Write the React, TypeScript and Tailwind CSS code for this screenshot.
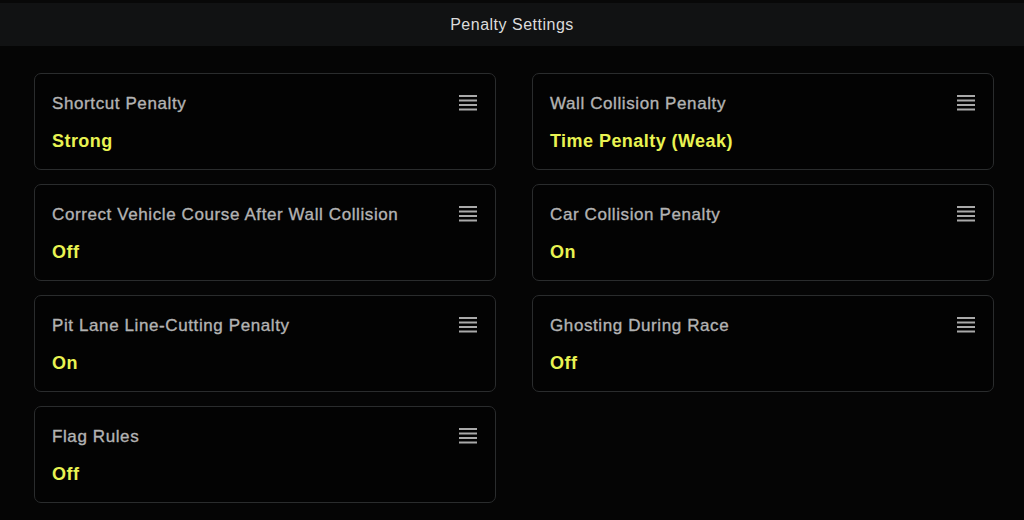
import React from "react";

// One setting card: label on top, current value in yellow below, menu glyph at right
interface SettingCardProps {
  label: string;
  value: string;
}

const LEFT_SETTINGS: SettingCardProps[] = [
  { label: "Shortcut Penalty", value: "Strong" },
  { label: "Correct Vehicle Course After Wall Collision", value: "Off" },
  { label: "Pit Lane Line-Cutting Penalty", value: "On" },
  { label: "Flag Rules", value: "Off" },
];

const RIGHT_SETTINGS: SettingCardProps[] = [
  { label: "Wall Collision Penalty", value: "Time Penalty (Weak)" },
  { label: "Car Collision Penalty", value: "On" },
  { label: "Ghosting During Race", value: "Off" },
];

function MenuIcon() {
  return (
    <svg width="18" height="16" viewBox="0 0 18 16" className="shrink-0">
      <rect x="0" y="0" width="18" height="2" fill="#a9a9a9" />
      <rect x="0" y="4.5" width="18" height="2" fill="#a9a9a9" />
      <rect x="0" y="9" width="18" height="2" fill="#a9a9a9" />
      <rect x="0" y="13.5" width="18" height="2" fill="#a9a9a9" />
    </svg>
  );
}

function SettingCard({ label, value }: SettingCardProps) {
  return (
    <div className="h-[97px] rounded-[7px] border border-[#2a2c2d] bg-[#030303] pl-[17px] pr-[18px] pt-[20px]">
      <div className="flex items-start justify-between">
        <div className="text-[17px] leading-[20px] tracking-[0.6px] text-[#b3b3b3] [-webkit-text-stroke:0.35px_#b3b3b3]">
          {label}
        </div>
        <div className="pt-[1px]">
          <MenuIcon />
        </div>
      </div>
      <div className="mt-[16px] text-[18px] font-bold leading-[22px] tracking-[0.45px] text-[#e9f352]">
        {value}
      </div>
    </div>
  );
}

export default function App() {
  return (
    <div
      className="h-[520px] w-[1024px] overflow-hidden bg-[#050505]"
      style={{ fontFamily: '"Liberation Sans", Arial, sans-serif' }}
    >
      <div className="flex h-[46px] items-center justify-center border-t-[3px] border-[#080808] bg-[#111213] pt-[1px]">
        <span className="text-[16px] tracking-[0.5px] text-[#dcdcdc]">
          Penalty Settings
        </span>
      </div>

      <div className="grid grid-cols-[462px_462px] gap-x-[36px] pl-[34px] pt-[27px]">
        <div className="flex flex-col gap-[14px]">
          {LEFT_SETTINGS.map((s, i) => (
            <SettingCard key={i} label={s.label} value={s.value} />
          ))}
        </div>
        <div className="flex flex-col gap-[14px]">
          {RIGHT_SETTINGS.map((s, i) => (
            <SettingCard key={i} label={s.label} value={s.value} />
          ))}
        </div>
      </div>
    </div>
  );
}
